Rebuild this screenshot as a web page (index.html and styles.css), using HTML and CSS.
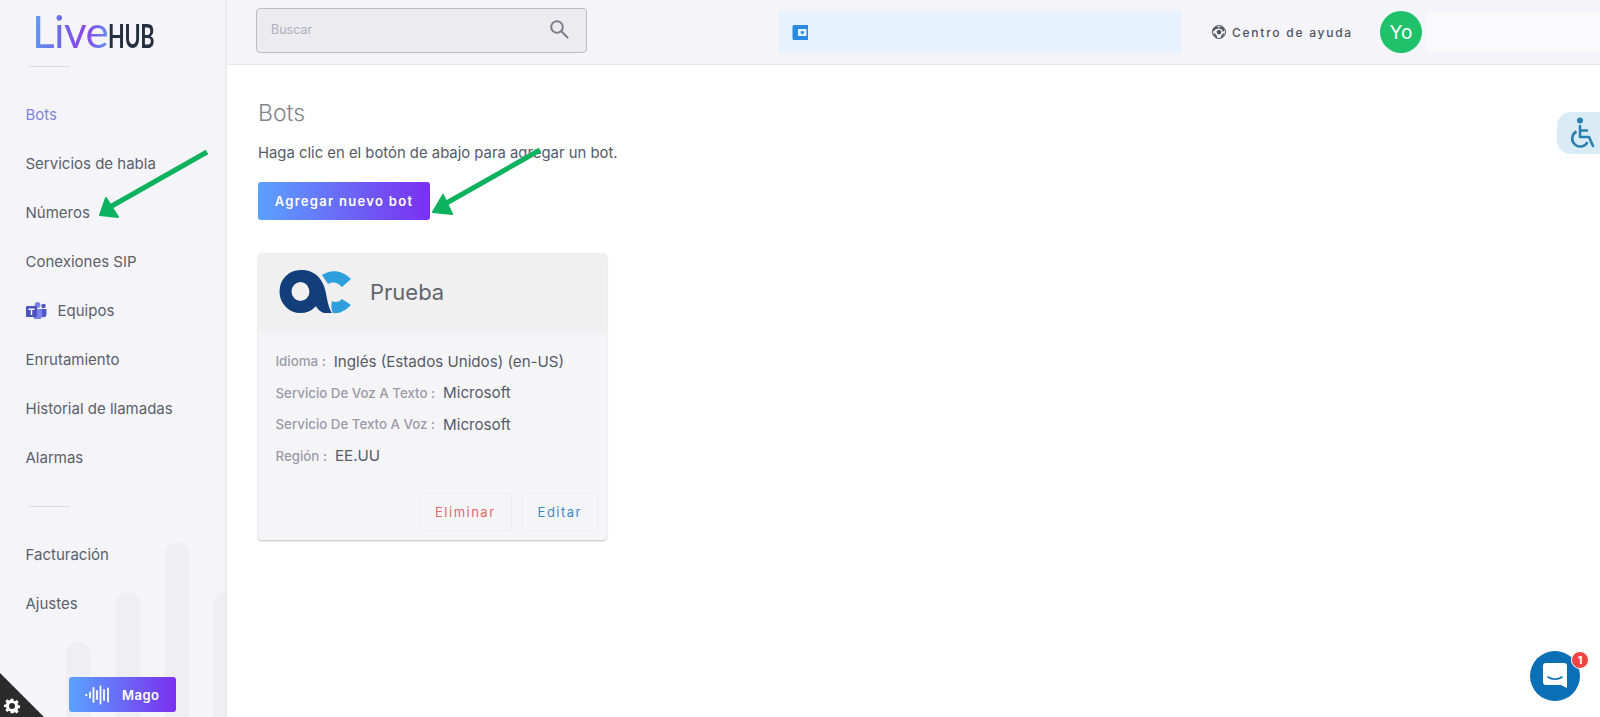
FILE: index.html
```html
<!DOCTYPE html>
<html lang="es">
<head>
<meta charset="utf-8">
<title>Bots</title>
<link rel="stylesheet" href="styles.css">
</head>
<body>
<div class="app">
  <aside class="sidebar">
    <svg class="bars" width="226" height="190" viewBox="0 0 226 190" aria-hidden="true">
      <rect x="66" y="115" width="24" height="120" rx="12"/>
      <rect x="116" y="65" width="24" height="170" rx="12"/>
      <rect x="165" y="15" width="24" height="220" rx="12"/>
      <rect x="214" y="65" width="24" height="170" rx="12"/>
    </svg>
    <div class="logo"><span class="logo-live">Live</span><span class="logo-hub">HUB</span></div>
    <div class="rule"></div>
    <nav class="nav">
      <a class="nav-item active">Bots</a>
      <a class="nav-item">Servicios de habla</a>
      <a class="nav-item">Números</a>
      <a class="nav-item">Conexiones SIP</a>
      <a class="nav-item nav-icon">
        <svg width="21" height="17" viewBox="0 0 21 17" aria-hidden="true">
          <circle cx="17.5" cy="4" r="2.3" fill="#5059c9"/>
          <path d="M14 7h6.5v5a3.2 3.2 0 0 1-6.5 0z" fill="#5059c9"/>
          <circle cx="11.5" cy="3" r="2.9" fill="#7b83eb"/>
          <path d="M7 7h9v6.5a4.5 4.5 0 0 1-9 0z" fill="#7b83eb"/>
          <rect x="0" y="4" width="11" height="11" rx="1" fill="#4b53bc"/>
          <path d="M2.5 6.6h6v1.3H6.2v5H4.8v-5H2.5z" fill="#fff"/>
        </svg>
        <span>Equipos</span>
      </a>
      <a class="nav-item">Enrutamiento</a>
      <a class="nav-item">Historial de llamadas</a>
      <a class="nav-item">Alarmas</a>
      <div class="rule rule-mid"></div>
      <a class="nav-item">Facturación</a>
      <a class="nav-item">Ajustes</a>
    </nav>
    <button class="mago">
      <svg width="25" height="20" viewBox="0 0 25 20" fill="none" stroke="#fff" stroke-width="1.8" stroke-linecap="round" aria-hidden="true">
        <path d="M1 10h.6M5 7.500v5M8.500 3v14M12 6v8M15.500 1.500v17M19 5v10M23 3.500v13"/>
      </svg>
      <span>Mago</span>
    </button>
    <div class="corner">
      <svg width="16" height="16" viewBox="0 0 24 24" aria-hidden="true">
        <path fill="#fff" fill-rule="evenodd" d="M10 1h4l.6 3.100 2 .8 2.600-1.800 2.800 2.800-1.800 2.600.8 2 3.100.6v4l-3.100.6-.8 2 1.800 2.600-2.800 2.800-2.600-1.800-2 .8L14 23h-4l-.6-3.100-2-.8-2.600 1.800-2.800-2.800 1.800-2.600-.8-2L0 14v-4l3.100-.6.8-2L2.100 4.800l2.800-2.800 2.500 1.800 2-.8zM12 7.500a4.500 4.500 0 1 0 0 9 4.500 4.500 0 0 0 0-9z"/>
      </svg>
    </div>
  </aside>

  <div class="content">
    <header class="topbar">
      <div class="search">
        <span class="search-text">Buscar</span>
        <svg width="20" height="20" viewBox="0 0 20 20" fill="none" stroke="#7e7e88" stroke-width="2" aria-hidden="true">
          <circle cx="8" cy="8" r="5.800"/><path d="M12.300 12.300 18.500 18.500" stroke-linecap="round"/>
        </svg>
      </div>
      <div class="wallet">
        <svg width="16" height="17" viewBox="0 0 16 17" aria-hidden="true">
          <path fill="#2b8ae2" fill-rule="evenodd" d="M2 1h14v15H2a1.500 1.500 0 0 1-1.500-1.500v-12A1.500 1.500 0 0 1 2 1zM6 5v7h8.500V5zM8.800 7.200h3.200v2.600H8.800z"/>
        </svg>
      </div>
      <a class="help">
        <svg width="14" height="14" viewBox="0 0 14 14" aria-hidden="true">
          <circle cx="7" cy="7" r="6.500" fill="#f5f5f9" stroke="#4f5360" stroke-width="1"/>
          <path d="M7 4.400 9.500 6.200 8.500 9.200h-3L4.500 6.200z" fill="#4f5360"/>
          <path d="M4.800 1.200 7 2.500l2.200-1.300.5.300 2.200 1.700.6 2.500-1.500 1-1.200-2.200L7 3.300 3 4.500l-1 2-1.400-.9.700-2.400zM1.300 9l1.500-.7 2 2.400.4 2.400-.9-.1zM12.700 9l-1.500-.7-2 2.400-.4 2.400.9-.1z" fill="#4f5360"/>
        </svg>
        <span>Centro de ayuda</span>
      </a>
      <div class="avatar">Yo</div>
      <div class="user-box"></div>
    </header>

    <main class="main">
      <h1 class="title">Bots</h1>
      <p class="lead">Haga clic en el botón de abajo para agregar un bot.</p>
      <button class="add">Agregar nuevo bot</button>

      <section class="card">
        <div class="card-head">
          <svg width="72" height="44" viewBox="0 0 72 44" aria-hidden="true">
            <path d="M43 5C52-1 63 0 72 9L63 17C58 12 54 11.500 49 14z" fill="#2e9fdc"/>
            <path d="M53 31C57 33 60 32 63 29L72 35C66 41 60 44 54 43C52 40 52 36 53 31z" fill="#2e9fdc"/>
            <ellipse cx="21.500" cy="21.500" rx="15" ry="15.500" fill="none" stroke="#123f7a" stroke-width="12"/>
            <path d="M22 0C34 0 41 6 45 16C48 24 48 36 53 43H45C37 41 34 30 30 19C28 13 26 10 22 10z" fill="#123f7a"/>
          </svg>
          <h2 class="card-title">Prueba</h2>
        </div>
        <dl class="card-body">
          <div class="row"><dt>Idioma :</dt><dd>Inglés (Estados Unidos) (en-US)</dd></div>
          <div class="row"><dt>Servicio De Voz A Texto :</dt><dd>Microsoft</dd></div>
          <div class="row"><dt>Servicio De Texto A Voz :</dt><dd>Microsoft</dd></div>
          <div class="row"><dt>Región :</dt><dd>EE.UU</dd></div>
        </dl>
        <div class="card-actions">
          <button class="ghost danger">Eliminar</button>
          <button class="ghost info">Editar</button>
        </div>
      </section>
    </main>
  </div>
</div>

<div class="a11y">
  <svg width="28" height="32" viewBox="0 0 28 32" fill="none" stroke="#2a7fb0" stroke-width="2.600" aria-hidden="true">
    <circle cx="11" cy="3.500" r="3" fill="#2a7fb0" stroke="none"/>
    <path d="M11 9v11h9l4 9" stroke-linecap="round" stroke-linejoin="round"/>
    <path d="M11 13.500h8"/>
    <path d="M7.500 14.500a8 8 0 1 0 11 10.500"/>
  </svg>
</div>

<svg class="arrows" width="1600" height="717" viewBox="0 0 1600 717" aria-hidden="true">
  <g fill="#0db25e" stroke="#0db25e" stroke-linejoin="round">
    <path d="M207 152 110 207" stroke-width="5" fill="none"/>
    <path d="M100 215 106 198 118 217z" stroke-width="2"/>
    <path d="M540 150 443 205" stroke-width="5" fill="none"/>
    <path d="M433 212 443 195 452 214z" stroke-width="2"/>
  </g>
</svg>

<div class="chat">
  <svg width="26" height="28" viewBox="0 0 26 28" aria-hidden="true">
    <path fill="#fff" d="M4 1h18a3 3 0 0 1 3 3v22l-6-3H4a3 3 0 0 1-3-3V4a3 3 0 0 1 3-3z"/>
    <path d="M6 15c4 3 10 3 14 0" fill="none" stroke="#0a6fb5" stroke-width="1.600" stroke-linecap="round"/>
  </svg>
  <span class="badge">1</span>
</div>
</body>
</html>
```
FILE: styles.css
```css
* { box-sizing: border-box; }
html, body { margin: 0; height: 717px; overflow: hidden; background: #fff; }
body { font-family: Inter, "Liberation Sans", sans-serif; color: #555a68; }
button { font-family: inherit; cursor: pointer; }
h1, h2, p, dl, dd { margin: 0; }

.app { display: flex; height: 717px; }

.sidebar {
  position: relative;
  flex: 0 0 227px;
  display: flex;
  flex-direction: column;
  background: #f5f5f9;
  border-right: 2px solid #ececf0;
  overflow: hidden;
}
.bars { position: absolute; left: 0; bottom: 0; fill: #eeeef3; }
.logo {
  position: relative;
  display: flex;
  align-items: baseline;
  height: 49px;
  padding: 10px 0 0 32px;
  line-height: 42px;
}
.logo-live {
  font-family: Lato, sans-serif;
  font-size: 44px;
  font-weight: 400;
  letter-spacing: -.6px;
  background: linear-gradient(100deg, #5aa6f5 0%, #6d6fe8 35%, #8b44e6 70%, #5a9cf0 100%);
  -webkit-background-clip: text;
  background-clip: text;
  color: transparent;
}
.logo-hub {
  display: inline-block;
  font-family: Lato, sans-serif;
  font-size: 32px;
  font-weight: 700;
  letter-spacing: -.5px;
  color: #23303f;
  transform: scaleX(.68);
  transform-origin: left bottom;
}
.rule { position: relative; width: 41px; height: 1px; margin: 17px 0 0 29px; background: #d9d9e0; flex: none; }
.rule-mid { margin: 24px 0 23px 29px; }
.nav { position: relative; display: flex; flex-direction: column; margin-top: 23px; }
.nav-item {
  display: flex;
  align-items: center;
  gap: 11px;
  height: 49px;
  padding-left: 25.500px;
  font-size: 15px;
  color: #5a5f6c;
}
.active { color: #8085da; }
.mago {
  position: relative;
  display: flex;
  align-items: center;
  gap: 12px;
  width: 107px;
  height: 35px;
  margin: auto 0 5px 69px;
  padding: 0 0 0 16px;
  border: 0;
  border-radius: 3px;
  background: linear-gradient(90deg, #5aa2ff, #7b2ff0);
  color: #fff;
  font-size: 13px;
  font-weight: 600;
  letter-spacing: .5px;
}
.corner {
  position: absolute;
  left: 0;
  bottom: 0;
  width: 44px;
  height: 44px;
  padding: 25px 0 0 4px;
  background: #2b2b2b;
  clip-path: polygon(0 0, 100% 100%, 0 100%);
}

.content { flex: 1; min-width: 0; display: flex; flex-direction: column; }
.topbar {
  display: flex;
  align-items: center;
  flex: 0 0 65px;
  padding: 0 0 0 29px;
  background: #f5f5f9;
  border-bottom: 1px solid #e6e6ea;
}
.search {
  display: flex;
  align-items: center;
  justify-content: space-between;
  width: 331px;
  height: 45px;
  margin-bottom: 4px;
  padding: 0 17px 2px 14px;
  background: #ebebf0;
  border: 1px solid #bcbcc4;
  border-radius: 4px;
}
.search-text { font-size: 12.500px; color: #aeaeb9; }
.wallet {
  display: flex;
  align-items: center;
  width: 402px;
  height: 42px;
  margin-left: 192px;
  padding-left: 13px;
  background: #e6f2fd;
}
.help {
  display: flex;
  align-items: center;
  gap: 6px;
  margin-left: 31px;
  width: 168px;
  font-size: 12px;
  font-weight: 500;
  letter-spacing: 1.750px;
  color: #4f5360;
}
.avatar {
  display: flex;
  align-items: center;
  justify-content: center;
  flex: none;
  width: 42px;
  height: 42px;
  border-radius: 50%;
  background: #1fc16b;
  color: #fff;
  font-size: 19px;
}
.user-box { flex: 1; height: 40px; margin-left: 4px; background: #fafafc; }

.main { flex: 1; padding: 36px 0 0 31px; }
.title { font-size: 23px; font-weight: 300; line-height: 24px; color: #85858e; }
.lead { margin-top: 17px; font-size: 14.850px; line-height: 22px; color: #555a68; }
.add {
  display: block;
  width: 172px;
  height: 38px;
  margin-top: 18px;
  border: 0;
  border-radius: 3px;
  background: linear-gradient(90deg, #5aa2ff, #7b2ff0);
  color: #fff;
  font-size: 13px;
  font-weight: 600;
  letter-spacing: 1.300px;
}
.card {
  display: flex;
  flex-direction: column;
  width: 349px;
  height: 287px;
  margin-top: 33px;
  background: #f5f5f8;
  border-radius: 4px;
  box-shadow: 0 1px 2px rgba(0, 0, 0, .25);
  overflow: hidden;
}
.card-head {
  display: flex;
  align-items: center;
  gap: 19px;
  height: 80px;
  padding: 0 0 3px 21px;
  background: #f0f0f1;
}
.card-title { font-size: 22px; font-weight: 400; color: #60656f; }
.card-body { display: flex; flex-direction: column; gap: 9.500px; padding: 17px 0 0 17.500px; }
.row { display: flex; align-items: center; gap: 8px; height: 22px; }
.row dt { font-size: 13.300px; font-weight: 500; color: #9a9aa8; }
.row dd { font-size: 15.150px; color: #555a68; }
.card-actions { display: flex; justify-content: flex-end; gap: 10px; margin-top: auto; padding: 0 9px 9px 0; }
.ghost {
  height: 38px;
  padding: 0 15px;
  background: #f5f5f8;
  border: 1px solid #ededf0;
  border-radius: 3px;
  font-size: 13px;
  letter-spacing: 1.500px;
}
.danger { color: #dd6a6a; }
.info { color: #3b8ac4; }

.a11y {
  position: absolute;
  top: 112px;
  right: 0;
  display: flex;
  align-items: center;
  width: 43px;
  height: 42px;
  padding-left: 12px;
  background: #d9ecf6;
  border-radius: 14px 0 0 14px;
  overflow: hidden;
}
.arrows { position: absolute; top: 0; left: 0; pointer-events: none; }
.chat {
  position: absolute;
  left: 1530px;
  top: 651px;
  display: flex;
  align-items: center;
  justify-content: center;
  width: 50px;
  height: 50px;
  border-radius: 50%;
  background: #0a6fb5;
}
.badge {
  position: absolute;
  top: 0;
  right: -9px;
  width: 18px;
  height: 18px;
  border-radius: 50%;
  border: 1px solid #fff;
  background: #ef4444;
  color: #fff;
  font-size: 11px;
  font-weight: 700;
  line-height: 16px;
  text-align: center;
}
```
